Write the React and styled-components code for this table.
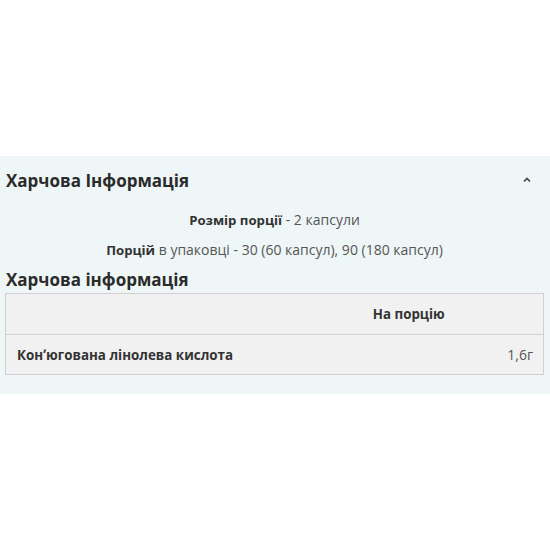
import React from "react";
import styled, { createGlobalStyle } from "styled-components";

const Global = createGlobalStyle`
  html, body { margin: 0; padding: 0; background: #fff; }
  body { font-family: "Open Sans", "Noto Sans", sans-serif; color: #333; }
`;

const Page = styled.div`
  width: 550px;
  height: 550px;
  padding-top: 156px;
  box-sizing: border-box;
`;

const Panel = styled.section`
  background: #eef6f8;
  padding: 0 6px 19px 5px;
`;

const Header = styled.div`
  display: flex;
  align-items: center;
  justify-content: space-between;
  height: 48px;
  padding-left: 1px;
  padding-right: 12px;
`;

const Title = styled.h2`
  margin: 0;
  font-size: 17px;
  font-weight: 700;
  color: #2b2b2b;
`;

const Caret = styled.span`
  display: flex;
  width: 10px;
  height: 10px;
`;

const Line = styled.p`
  margin: 0;
  text-align: center;
  font-size: 14px;
  line-height: 30px;
  color: #555;
  & b { font-weight: 700; color: #333; font-size: 13.2px; }
`;

const Lines = styled.div`
  padding-top: 1px;
`;

const SubTitle = styled.h3`
  margin: 4px 0 0 1px;
  font-size: 17px;
  font-weight: 700;
  line-height: 22px;
  color: #2b2b2b;
`;

const Table = styled.table`
  width: 100%;
  border-collapse: collapse;
  background: #f1f1f1;
  border: 1px solid #d0d0d0;
  table-layout: fixed;
  margin-top: 2px;
`;

const Th = styled.th`
  height: 40px;
  padding: 0 12px;
  font-size: 13.3px;
  font-weight: 700;
  color: #333;
  text-align: ${(p) => p.$align || "center"};
  border-bottom: 1px solid #d0d0d0;
`;

const Td = styled.td`
  height: 39px;
  padding: 0 10px 0 11px;
  font-size: ${(p) => (p.$bold ? "13.4px" : "14px")};
  font-weight: ${(p) => (p.$bold ? 700 : 400)};
  color: ${(p) => (p.$bold ? "#333" : "#555")};
  text-align: ${(p) => p.$align || "left"};
`;

export default function App() {
  return (
    <>
      <Global />
      <Page>
        <Panel>
          <Header>
            <Title>Харчова Інформація</Title>
            <Caret>
              <svg width="10" height="10" viewBox="0 0 10 10">
                <path d="M2 6.5 L5 3.5 L8 6.5" fill="none" stroke="#444" strokeWidth="1.6" />
              </svg>
            </Caret>
          </Header>
          <Lines>
            <Line>
              <b>Розмір порції</b> - 2 капсули
            </Line>
            <Line>
              <b>Порцій</b> в упаковці - 30 (60 капсул), 90 (180 капсул)
            </Line>
          </Lines>
          <SubTitle>Харчова інформація</SubTitle>
          <Table>
            <thead>
              <tr>
                <Th></Th>
                <Th>На порцію</Th>
              </tr>
            </thead>
            <tbody>
              <tr>
                <Td $bold>Конʼюгована лінолева кислота</Td>
                <Td $align="right">1,6г</Td>
              </tr>
            </tbody>
          </Table>
        </Panel>
      </Page>
    </>
  );
}
